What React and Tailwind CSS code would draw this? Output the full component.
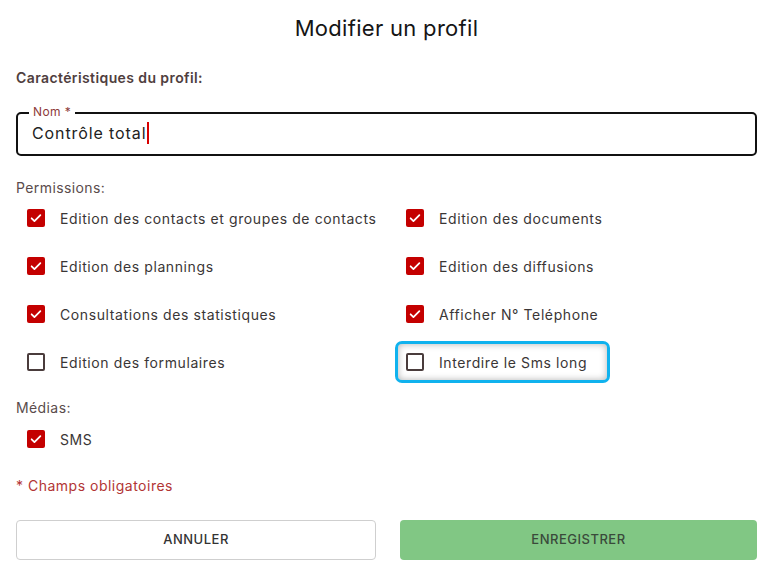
import React from "react";

const font = { fontFamily: "Inter, 'Noto Sans', sans-serif" };

function Check({ checked }) {
  return checked ? (
    <span className="flex h-[18px] w-[18px] items-center justify-center rounded-[2px] bg-[#c40000]">
      <svg width="14" height="14" viewBox="0 0 24 24" fill="none">
        <path d="M4.5 12.5l4.8 4.8L19.5 7" stroke="white" strokeWidth="3" strokeLinecap="round" strokeLinejoin="round" />
      </svg>
    </span>
  ) : (
    <span className="block h-[18px] w-[18px] rounded-[2px] border-2 border-[#4a3c3c]" />
  );
}

function Item({ label, checked, highlight }) {
  return (
    <div
      className={
        "flex h-[42px] items-center rounded-[7px] border-[3px] pl-[8px] " +
        (highlight
          ? "w-[215px] border-[#10b2ee] shadow-[inset_0_0_7px_rgba(0,0,0,0.3)]"
          : "border-transparent")
      }
    >
      <Check checked={checked} />
      <span className="ml-[15px] text-[14px] tracking-[0.6px] text-[#3a3636]">{label}</span>
    </div>
  );
}

export default function App() {
  return (
    <div style={font} className="h-[572px] w-[769px] bg-white pl-[16px] pr-[12px] pt-[12px]">
      <h1 className="text-center text-[22px] leading-[32px] tracking-[0.3px] text-[#151515]">Modifier un profil</h1>
      <div className="mt-[24px] text-[14px] font-semibold leading-[20px] tracking-[0.4px] text-[#4f3e3e]">
        Caractéristiques du profil:
      </div>
      <div className="relative mt-[24px] h-[44px] rounded-[5px] border-2 border-[#111] pl-[14px]">
        <span className="absolute -top-[9px] left-[11px] bg-white px-[4px] text-[12px] leading-[14px] tracking-[0.4px] text-[#8e3b3b]">
          Nom *
        </span>
        <div className="flex h-full items-center pb-[2px] text-[16px] tracking-[0.9px] text-[#222]">
          Contrôle total
          <span className="ml-[1px] inline-block h-[22px] w-[2px] bg-[#d80000]" />
        </div>
      </div>
      <div className="mt-[22px] text-[14px] leading-[20px] tracking-[0.4px] text-[#5a4c4c]">Permissions:</div>
      <div className="-mt-[1px] grid grid-cols-[379px_1fr] gap-y-[6px]">
        <Item label="Edition des contacts et groupes de contacts" checked />
        <Item label="Edition des documents" checked />
        <Item label="Edition des plannings" checked />
        <Item label="Edition des diffusions" checked />
        <Item label="Consultations des statistiques" checked />
        <Item label="Afficher N° Teléphone" checked />
        <Item label="Edition des formulaires" />
        <Item label="Interdire le Sms long" highlight />
      </div>
      <div className="mt-[15px] text-[14px] leading-[20px] tracking-[0.4px] text-[#5a4c4c]">Médias:</div>
      <div>
        <Item label="SMS" checked />
      </div>
      <div className="mt-[16px] text-[14px] leading-[20px] tracking-[0.5px] text-[#b23535]">* Champs obligatoires</div>
      <div className="mt-[24px] grid grid-cols-[360px_1fr] gap-[24px]">
        <button className="h-[40px] rounded-[4px] border border-[#cfcfcf] bg-white text-[13px] font-medium tracking-[0.5px] text-[#333]">
          ANNULER
        </button>
        <button className="h-[40px] rounded-[4px] bg-[#81c784] text-[13px] font-medium tracking-[0.5px] text-[#3a4a3b]">
          ENREGISTRER
        </button>
      </div>
    </div>
  );
}
